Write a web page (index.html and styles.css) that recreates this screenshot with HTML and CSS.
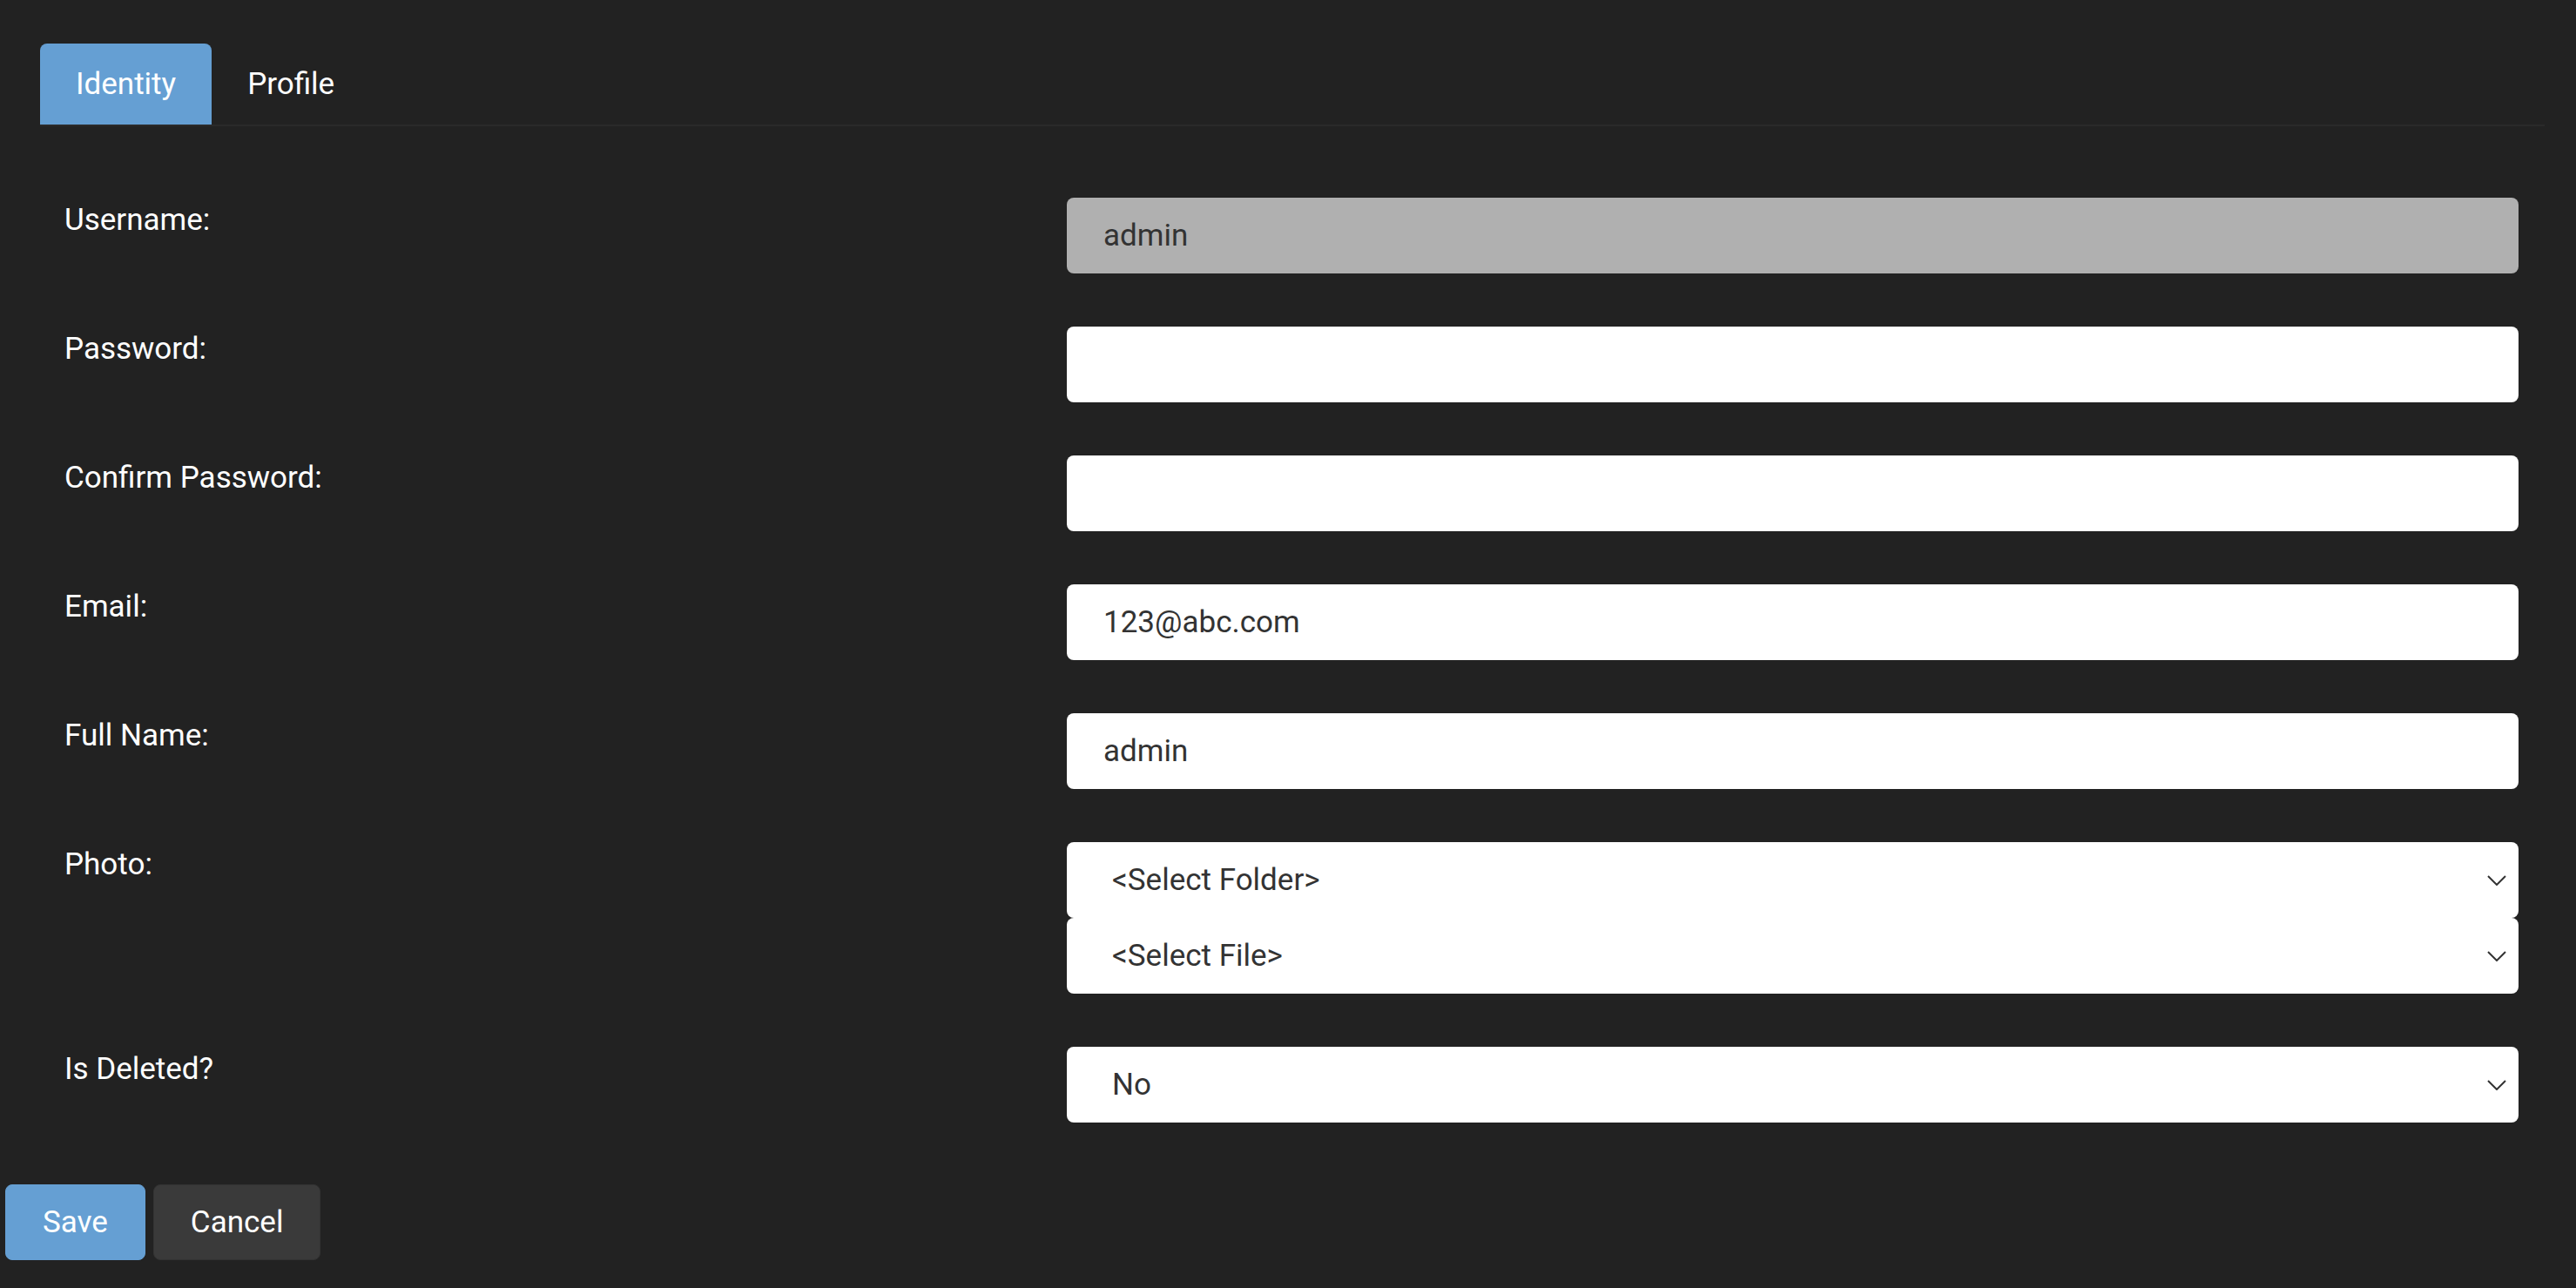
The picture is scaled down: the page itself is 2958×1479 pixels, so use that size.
FILE: index.html
```html
<!DOCTYPE html>
<html lang="en">
<head>
<meta charset="utf-8">
<title>Identity</title>
<link rel="stylesheet" href="styles.css">
</head>
<body>
<div class="page">
  <nav class="tabs">
    <div class="tab tab-active">Identity</div>
    <div class="tab">Profile</div>
  </nav>
  <form class="form">
    <div class="row">
      <label class="label">Username:</label>
      <div class="field"><input class="input input-disabled" type="text" value="admin" readonly></div>
    </div>
    <div class="row">
      <label class="label">Password:</label>
      <div class="field"><input class="input" type="password" value=""></div>
    </div>
    <div class="row">
      <label class="label">Confirm Password:</label>
      <div class="field"><input class="input" type="password" value=""></div>
    </div>
    <div class="row">
      <label class="label">Email:</label>
      <div class="field"><input class="input" type="text" value="123@abc.com"></div>
    </div>
    <div class="row">
      <label class="label">Full Name:</label>
      <div class="field"><input class="input" type="text" value="admin"></div>
    </div>
    <div class="row">
      <label class="label">Photo:</label>
      <div class="field field-stack">
        <div class="select-wrap">
          <select class="select"><option>&lt;Select Folder&gt;</option></select>
          <svg class="chev" width="22" height="12" viewBox="0 0 22 12"><polyline points="1,1 11,11 21,1" fill="none" stroke="#333" stroke-width="2"/></svg>
        </div>
        <div class="select-wrap">
          <select class="select"><option>&lt;Select File&gt;</option></select>
          <svg class="chev" width="22" height="12" viewBox="0 0 22 12"><polyline points="1,1 11,11 21,1" fill="none" stroke="#333" stroke-width="2"/></svg>
        </div>
      </div>
    </div>
    <div class="row">
      <label class="label">Is Deleted?</label>
      <div class="field">
        <div class="select-wrap">
          <select class="select"><option>No</option><option>Yes</option></select>
          <svg class="chev" width="22" height="12" viewBox="0 0 22 12"><polyline points="1,1 11,11 21,1" fill="none" stroke="#333" stroke-width="2"/></svg>
        </div>
      </div>
    </div>
  </form>
  <div class="actions">
    <button class="btn btn-primary" type="button">Save</button>
    <button class="btn btn-secondary" type="button">Cancel</button>
  </div>
</div>
</body>
</html>
```

FILE: styles.css
```css
html, body {
  margin: 0;
  padding: 0;
  background: #222222;
}

body {
  font-family: Roboto, "Liberation Sans", sans-serif;
  font-size: 35px;
  color: #ffffff;
  min-height: 1479px;
}

.page {
  padding-top: 50px;
}

.tabs {
  display: flex;
  margin: 0 36px 0 46px;
  border-bottom: 2px solid #2a2a2a;
}

.tab {
  height: 93px;
  line-height: 93px;
  padding: 0 41px;
  color: #ffffff;
  border-radius: 8px 8px 0 0;
}

.tab-active {
  background: #659fd3;
}

.form {
  padding: 82px 66px 0 74px;
}

.row {
  display: grid;
  grid-template-columns: 1151px 1fr;
  align-items: start;
  margin-bottom: 61px;
}

.row:last-child {
  margin-bottom: 0;
}

.label {
  padding-top: 5px;
  line-height: normal;
  color: #ffffff;
}

.field {
  display: flex;
  flex-direction: column;
}

.input,
.select {
  box-sizing: border-box;
  width: 100%;
  height: 87px;
  margin: 0;
  border: none;
  border-radius: 8px;
  background: #ffffff;
  color: #333333;
  font-family: inherit;
  font-size: 35px;
  outline: none;
}

.input {
  padding: 0 42px;
}

.input-disabled {
  background: #b0b0b0;
  color: #333333;
}

.select-wrap {
  position: relative;
}

.select {
  -webkit-appearance: none;
  appearance: none;
  padding: 0 60px 0 52px;
}

.chev {
  position: absolute;
  right: 14px;
  top: 38px;
  pointer-events: none;
}

.actions {
  display: flex;
  gap: 9px;
  padding: 71px 0 0 6px;
}

.btn {
  box-sizing: border-box;
  height: 87px;
  padding: 0 42px;
  border-radius: 8px;
  font-family: inherit;
  font-size: 35px;
  color: #ffffff;
  cursor: pointer;
}

.btn-primary {
  background: #659fd3;
  border: 1px solid #659fd3;
}

.btn-secondary {
  background: #3a3a3a;
  border: 1px solid #333333;
}
```
